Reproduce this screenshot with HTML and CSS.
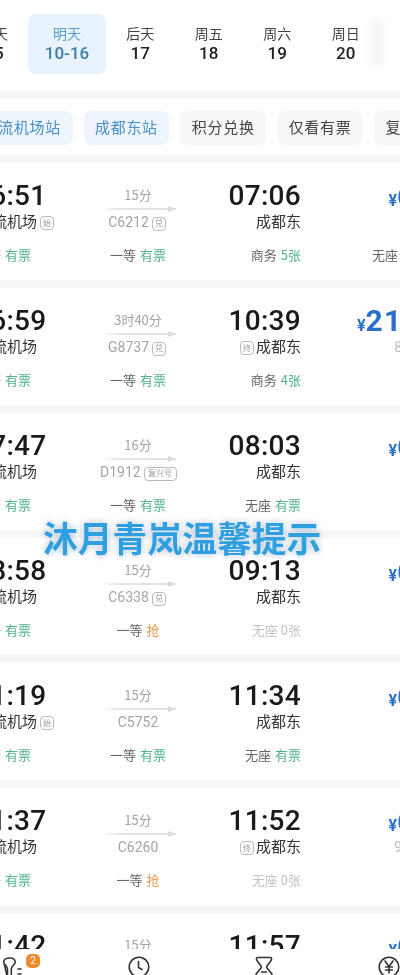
FILE: index.html
```html
<!DOCTYPE html>
<html lang="zh-CN">
<head>
    <meta charset="UTF-8">
    <meta name="viewport" content="width=device-width, initial-scale=1.0">
    <title>车次列表</title>
    <link rel="stylesheet" href="styles.css">
</head>
<body>
<div class="page">
    <div class="dates">
        <div class="date date-first"><span>今天</span><b>15</b></div>
        <div class="date date-active"><span>明天</span><b>10-16</b></div>
        <div class="date"><span>后天</span><b>17</b></div>
        <div class="date"><span>周五</span><b>18</b></div>
        <div class="date"><span>周六</span><b>19</b></div>
        <div class="date"><span>周日</span><b>20</b></div>
        <div class="date-fade"></div>
    </div>

    <div class="filters">
        <div class="chip chip-on">双流机场站</div>
        <div class="chip chip-on">成都东站</div>
        <div class="chip">积分兑换</div>
        <div class="chip">仅看有票</div>
        <div class="chip">复兴号</div>
    </div>

    <div class="list">
        <div class="train">
            <div class="col col-dep">
                <div class="time">06:51</div>
                <div class="sub">双流机场<i class="tag">始</i></div>
                <div class="seat">二等 <em>有票</em></div>
            </div>
            <div class="col col-mid">
                <div class="dur">15分</div>
                <div class="arrow"></div>
                <div class="sub no">C6212<i class="tag">兑</i></div>
                <div class="seat">一等 <em>有票</em></div>
            </div>
            <div class="col col-arr">
                <div class="time">07:06</div>
                <div class="sub">成都东</div>
                <div class="seat">商务 <em>5张</em></div>
            </div>
            <div class="col col-price">
                <div class="price"><small>¥</small>60</div>
                <div class="sub">&nbsp;</div>
                <div class="seat seat-left">无座 <em>有票</em></div>
            </div>
        </div>

        <div class="train">
            <div class="col col-dep">
                <div class="time">06:59</div>
                <div class="sub">双流机场</div>
                <div class="seat">二等 <em>有票</em></div>
            </div>
            <div class="col col-mid">
                <div class="dur">3时40分</div>
                <div class="arrow"></div>
                <div class="sub no">G8737<i class="tag">兑</i></div>
                <div class="seat">一等 <em>有票</em></div>
            </div>
            <div class="col col-arr">
                <div class="time">10:39</div>
                <div class="sub"><i class="tag">终</i>成都东</div>
                <div class="seat">商务 <em>4张</em></div>
            </div>
            <div class="col col-price">
                <div class="price"><small>¥</small>215<span class="cents">.5</span></div>
                <div class="sub off">8折</div>
            </div>
        </div>

        <div class="train">
            <div class="col col-dep">
                <div class="time">07:47</div>
                <div class="sub">双流机场</div>
                <div class="seat">二等 <em>有票</em></div>
            </div>
            <div class="col col-mid">
                <div class="dur">16分</div>
                <div class="arrow"></div>
                <div class="sub no">D1912<i class="tag tag-wide">复兴号</i></div>
                <div class="seat">一等 <em>有票</em></div>
            </div>
            <div class="col col-arr">
                <div class="time">08:03</div>
                <div class="sub">成都东</div>
                <div class="seat">无座 <em>有票</em></div>
            </div>
            <div class="col col-price">
                <div class="price"><small>¥</small>60</div>
            </div>
        </div>

        <div class="train">
            <div class="col col-dep">
                <div class="time">08:58</div>
                <div class="sub">双流机场</div>
                <div class="seat">二等 <em>有票</em></div>
            </div>
            <div class="col col-mid">
                <div class="dur">15分</div>
                <div class="arrow"></div>
                <div class="sub no">C6338<i class="tag">兑</i></div>
                <div class="seat">一等 <em class="grab">抢</em></div>
            </div>
            <div class="col col-arr">
                <div class="time">09:13</div>
                <div class="sub">成都东</div>
                <div class="seat seat-none">无座 0张</div>
            </div>
            <div class="col col-price">
                <div class="price"><small>¥</small>60</div>
            </div>
        </div>

        <div class="train">
            <div class="col col-dep">
                <div class="time">11:19</div>
                <div class="sub">双流机场<i class="tag">始</i></div>
                <div class="seat">二等 <em>有票</em></div>
            </div>
            <div class="col col-mid">
                <div class="dur">15分</div>
                <div class="arrow"></div>
                <div class="sub no">C5752</div>
                <div class="seat">一等 <em>有票</em></div>
            </div>
            <div class="col col-arr">
                <div class="time">11:34</div>
                <div class="sub">成都东</div>
                <div class="seat">无座 <em>有票</em></div>
            </div>
            <div class="col col-price">
                <div class="price"><small>¥</small>60</div>
            </div>
        </div>

        <div class="train">
            <div class="col col-dep">
                <div class="time">11:37</div>
                <div class="sub">双流机场</div>
                <div class="seat">二等 <em>有票</em></div>
            </div>
            <div class="col col-mid">
                <div class="dur">15分</div>
                <div class="arrow"></div>
                <div class="sub no">C6260</div>
                <div class="seat">一等 <em class="grab">抢</em></div>
            </div>
            <div class="col col-arr">
                <div class="time">11:52</div>
                <div class="sub"><i class="tag">终</i>成都东</div>
                <div class="seat seat-none">无座 0张</div>
            </div>
            <div class="col col-price">
                <div class="price"><small>¥</small>60</div>
                <div class="sub off">9折</div>
            </div>
        </div>

        <div class="train">
            <div class="col col-dep">
                <div class="time">11:42</div>
            </div>
            <div class="col col-mid">
                <div class="dur">15分</div>
            </div>
            <div class="col col-arr">
                <div class="time">11:57</div>
            </div>
            <div class="col col-price">
                <div class="price"><small>¥</small>60</div>
            </div>
        </div>
    </div>

    <div class="tabbar">
        <div class="tab">
            <svg class="icon" viewBox="0 0 22 22" width="22" height="22">
                <path d="M.8 6C.8 3 3.500 2 6.500 2s5.700 1 5.700 4c0 2.500-3.700 4-3.900 7v9M4.500 22v-9C4.300 10 .8 8.500 .8 6z"/>
                <path d="M15 13h3M15 18h3"/>
            </svg>
            <span class="badge">2</span>
        </div>
        <div class="tab">
            <svg class="icon" viewBox="0 0 22 22" width="22" height="22">
                <circle cx="11" cy="11" r="9.800"/>
                <path d="M10.500 5.500v6l3.500 2"/>
            </svg>
        </div>
        <div class="tab">
            <svg class="icon" viewBox="0 0 22 22" width="22" height="22">
                <path d="M5 1.500h12c1.500 0 2 1.500 1 3L14 10c-.5.700-.5 1.300 0 2l4.500 5.500c1 1.300.5 3-1 3h-13c-1.500 0-2-1.700-1-3L8 12c.5-.7.5-1.300 0-2L4 4.500c-1-1.500-.5-3 1-3z"/>
                <path d="M8.500 16h5"/>
            </svg>
        </div>
        <div class="tab">
            <svg class="icon" viewBox="0 0 22 22" width="22" height="22">
                <circle cx="11" cy="11" r="9.800"/>
                <path d="M7 5l4 5.500L15 5M11 10.500V17M7.500 11h7M7.500 14h7"/>
            </svg>
        </div>
    </div>

    <div class="notice">沐月青岚温馨提示</div>
</div>
</body>
</html>
```

FILE: styles.css
```css
* {
    box-sizing: border-box;
}

body {
    margin: 0;
    background-color: #fff;
    font-family: "Noto Sans CJK SC", Roboto, sans-serif;
    color: #333;
}

.page {
    position: relative;
    display: flex;
    flex-direction: column;
    width: 400px;
    height: 975px;
    overflow: hidden;
    background-color: #f6f7f9;
    filter: blur(0.4px);
}

/* date strip */
.dates {
    position: relative;
    display: flex;
    flex: none;
    height: 91px;
    padding-top: 14px;
    margin-left: -34px;
    width: 434px;
    background-color: #fff;
}

.date {
    display: flex;
    flex-direction: column;
    align-items: center;
    width: 68.500px;
    height: 60px;
    padding-top: 9px;
}

.date span {
    font-size: 14px;
    line-height: 20px;
    color: #444;
}

.date b {
    font-family: Roboto, sans-serif;
    font-size: 17px;
    font-weight: 500;
    line-height: 20px;
    color: #222;
}

.date-first {
    width: 56px;
    margin-right: 6px;
}

.date-active {
    width: 78px;
    border-radius: 8px;
    background-color: #e8f3fd;
}

.date-active span {
    color: #5c9ccf;
}

.date-active b {
    color: #3b7fae;
}

.date-fade {
    position: absolute;
    top: 20px;
    left: 399px;
    width: 21px;
    height: 45px;
    background: linear-gradient(to right, #fff, #f5f5f5 50%, #fbfbfb);
    filter: blur(2px);
}

/* filter chips */
.filters {
    display: flex;
    flex: none;
    gap: 11px;
    height: 56px;
    margin-top: 8px;
    padding: 12px 0 10px;
    margin-left: -29px;
    width: 500px;
    background-color: #fff;
}

.chip {
    flex: none;
    height: 34px;
    padding: 0 11.500px;
    border-radius: 8px;
    background-color: #f7f7f8;
    font-size: 15px;
    line-height: 32px;
    letter-spacing: 0.7px;
    color: #444;
}

.chip-on {
    background-color: #edf4fc;
    color: #4a8fc5;
}

/* train rows */
.list {
    flex: 1;
    min-height: 0;
    overflow: hidden;
    margin-top: 8px;
}

.train {
    display: grid;
    grid-template-columns: 126px 76px 125px 133px;
    height: 117px;
    margin-bottom: 8px;
    margin-left: -26px;
    width: 460px;
    padding-top: 16px;
    background-color: #fff;
}

.col {
    min-width: 0;
    white-space: nowrap;
}

.col-dep {
    text-align: left;
}

.col-mid {
    text-align: center;
}

.col-arr,
.col-price {
    text-align: right;
}

.time {
    height: 34px;
    font-family: Roboto, sans-serif;
    font-size: 28px;
    font-weight: 500;
    line-height: 34px;
    letter-spacing: 0.3px;
    color: #1a1a1a;
}

.sub {
    height: 18px;
    margin-top: -1px;
    font-size: 15px;
    line-height: 18px;
    color: #333;
}

.col-dep .sub {
    padding-left: 3px;
}

.tag {
    display: inline-block;
    width: 14px;
    height: 14px;
    margin: 0 2px 0 3px;
    border: 1px solid #bbb;
    border-radius: 4px;
    font-size: 8px;
    font-style: normal;
    line-height: 12px;
    text-align: center;
    vertical-align: 1px;
    color: #999;
}

.tag-wide {
    width: 33px;
}

.seat {
    margin-top: 16px;
    font-size: 13px;
    line-height: 18px;
    color: #666;
}

.col-dep .seat {
    padding-left: 1px;
}

.seat em {
    margin-left: 1px;
    font-style: normal;
    color: #4fb28c;
}

.seat .grab {
    color: #e9964b;
}

.seat-none {
    color: #c4c4c4;
}

.seat-left {
    text-align: left;
    padding-left: 71px;
}

.dur {
    height: 27px;
    margin-top: 2px;
    font-size: 13px;
    line-height: 27px;
    color: #a3a3a3;
}

.arrow {
    position: relative;
    height: 2px;
    margin-bottom: 3px;
    background: linear-gradient(to right, #fff, #e6e6e6 25%, #e0e0e0);
}

.arrow::after {
    content: "";
    position: absolute;
    top: -2px;
    right: 0;
    width: 0;
    height: 0;
    border-left: 8px solid #dcdcdc;
    border-top: 3px solid transparent;
    border-bottom: 3px solid transparent;
}

.no {
    margin-top: 0;
    margin-bottom: -1px;
    font-family: Roboto, sans-serif;
    font-size: 14px;
    color: #a5a5a5;
}

.price {
    height: 34px;
    font-family: Roboto, sans-serif;
    font-size: 30px;
    font-weight: 700;
    line-height: 34px;
    letter-spacing: 1.300px;
    color: #2a6fc9;
}

.price small {
    font-size: 16px;
    font-weight: 700;
    letter-spacing: 0;
}

.cents {
    font-size: 15px;
    letter-spacing: 0;
}

.off {
    margin-top: 0;
    padding-right: 18px;
    font-family: Roboto, sans-serif;
    font-size: 14px;
    color: #bbb;
}

/* bottom bar */
.tabbar {
    display: grid;
    flex: none;
    grid-template-columns: repeat(4, 125px);
    height: 26px;
    margin-left: -49px;
    width: 500px;
    padding-top: 7px;
    overflow: hidden;
    background-color: #fff;
}

.tab {
    position: relative;
    display: flex;
    justify-content: center;
}

.icon {
    flex: none;
    fill: none;
    stroke: #333;
    stroke-width: 1.600;
    stroke-linecap: round;
    stroke-linejoin: round;
}

.badge {
    position: absolute;
    top: -2px;
    left: 75px;
    width: 14px;
    height: 14px;
    border-radius: 5px;
    background-color: #f08a2c;
    font-family: Roboto, sans-serif;
    font-size: 10px;
    line-height: 14px;
    text-align: center;
    color: #fff;
}

/* caption burnt over the screen */
.notice {
    position: absolute;
    top: 514px;
    left: 43px;
    font-size: 34.800px;
    font-weight: 700;
    line-height: 46px;
    white-space: nowrap;
    color: #2f9fe2;
    text-shadow: 0 0 3px #fff, 0 0 6px rgba(30, 70, 130, 0.45);
}
```
